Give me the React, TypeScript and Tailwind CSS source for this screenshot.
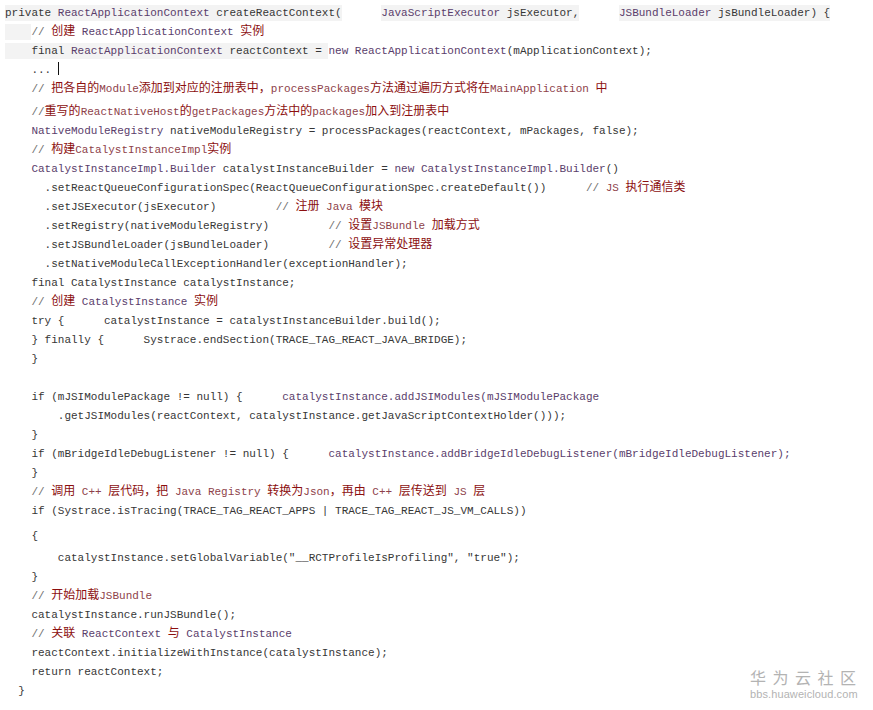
import React from "react";

type Kind = "c" | "t" | "g" | "r" | "e";
type Seg = [Kind, string, boolean?];

const colors: Record<Kind, string> = {
  c: "text-[#363636]",
  t: "text-[#5a3d6b]",
  g: "text-[#707070]",
  r: "text-[#8c0f0f]",
  e: "text-[#8e3f4a]",
};

// CJK glyphs are full width (12px), latin runs are 11px mono (6.6px each)
function splitCjk(text: string) {
  const parts = text.split(/([\u3000-\u9fff\uff00-\uffef]+)/);
  return parts.map((p, i) =>
    i % 2 === 1 ? (
      <span key={i} className="text-[12px]">
        {p}
      </span>
    ) : (
      p
    )
  );
}

type LineDef = { segs: Seg[]; extra?: string; cursor?: boolean };

const I4 = "    ";
const I6 = "      ";
const I8 = "        ";
const T6 = "      ";
const T9 = "         ";

const lines: LineDef[] = [
  {
    segs: [
      ["c", "private ", true],
      ["t", "ReactApplicationContext", true],
      ["c", " createReactContext(", true],
      ["c", T6],
      ["t", "JavaScriptExecutor", true],
      ["c", " jsExecutor,", true],
      ["c", T6],
      ["t", "JSBundleLoader", true],
      ["c", " jsBundleLoader) {", true],
    ],
  },
  {
    segs: [
      ["c", I4, true],
      ["g", "// "],
      ["r", "创建 "],
      ["t", "ReactApplicationContext"],
      ["r", " 实例"],
    ],
  },
  {
    segs: [
      ["c", I4 + "final ", true],
      ["t", "ReactApplicationContext", true],
      ["c", " reactContext = ", true],
      ["t", "new ReactApplicationContext"],
      ["c", "(mApplicationContext);"],
    ],
  },
  { segs: [["c", I4 + "... "]], cursor: true },
  {
    segs: [
      ["c", I4],
      ["g", "// "],
      ["r", "把各自的"],
      ["e", "Module"],
      ["r", "添加到对应的注册表中，"],
      ["e", "processPackages"],
      ["r", "方法通过遍历方式将在"],
      ["e", "MainApplication "],
      ["r", "中"],
    ],
  },
  {
    extra: "mt-[4px]",
    segs: [
      ["c", I4],
      ["g", "//"],
      ["r", "重写的"],
      ["e", "ReactNativeHost"],
      ["r", "的"],
      ["e", "getPackages"],
      ["r", "方法中的"],
      ["e", "packages"],
      ["r", "加入到注册表中"],
    ],
  },
  {
    segs: [
      ["c", I4],
      ["t", "NativeModuleRegistry"],
      ["c", " nativeModuleRegistry = processPackages(reactContext, mPackages, false);"],
    ],
  },
  {
    segs: [
      ["c", I4],
      ["g", "// "],
      ["r", "构建"],
      ["e", "CatalystInstanceImpl"],
      ["r", "实例"],
    ],
  },
  {
    segs: [
      ["c", I4],
      ["t", "CatalystInstanceImpl.Builder"],
      ["c", " catalystInstanceBuilder = "],
      ["t", "new CatalystInstanceImpl.Builder"],
      ["c", "()"],
    ],
  },
  {
    segs: [
      ["c", I6 + ".setReactQueueConfigurationSpec(ReactQueueConfigurationSpec.createDefault())" + T6],
      ["g", "// "],
      ["e", "JS "],
      ["r", "执行通信类"],
    ],
  },
  {
    segs: [
      ["c", I6 + ".setJSExecutor(jsExecutor)" + T9],
      ["g", "// "],
      ["r", "注册 "],
      ["e", "Java "],
      ["r", "模块"],
    ],
  },
  {
    segs: [
      ["c", I6 + ".setRegistry(nativeModuleRegistry)" + T9],
      ["g", "// "],
      ["r", "设置"],
      ["e", "JSBundle "],
      ["r", "加载方式"],
    ],
  },
  {
    segs: [
      ["c", I6 + ".setJSBundleLoader(jsBundleLoader)" + T9],
      ["g", "// "],
      ["r", "设置异常处理器"],
    ],
  },
  { segs: [["c", I6 + ".setNativeModuleCallExceptionHandler(exceptionHandler);"]] },
  { segs: [["c", I4 + "final CatalystInstance catalystInstance;"]] },
  {
    segs: [
      ["c", I4],
      ["g", "// "],
      ["r", "创建 "],
      ["t", "CatalystInstance"],
      ["r", " 实例"],
    ],
  },
  { segs: [["c", I4 + "try {" + T6 + "catalystInstance = catalystInstanceBuilder.build();"]] },
  { segs: [["c", I4 + "} finally {" + T6 + "Systrace.endSection(TRACE_TAG_REACT_JAVA_BRIDGE);"]] },
  { segs: [["c", I4 + "}"]] },
  { segs: [["c", " "]] },
  {
    segs: [
      ["c", I4 + "if (mJSIModulePackage != null) {" + T6],
      ["t", "catalystInstance.addJSIModules(mJSIModulePackage"],
    ],
  },
  { segs: [["c", I8 + ".getJSIModules(reactContext, catalystInstance.getJavaScriptContextHolder()));"]] },
  { segs: [["c", I4 + "}"]] },
  {
    segs: [
      ["c", I4 + "if (mBridgeIdleDebugListener != null) {" + T6],
      ["t", "catalystInstance.addBridgeIdleDebugListener(mBridgeIdleDebugListener);"],
    ],
  },
  { segs: [["c", I4 + "}"]] },
  {
    segs: [
      ["c", I4],
      ["g", "// "],
      ["r", "调用 "],
      ["e", "C++ "],
      ["r", "层代码，把 "],
      ["e", "Java Registry "],
      ["r", "转换为"],
      ["e", "Json"],
      ["r", "，再由 "],
      ["e", "C++ "],
      ["r", "层传送到 "],
      ["e", "JS "],
      ["r", "层"],
    ],
  },
  { segs: [["c", I4 + "if (Systrace.isTracing(TRACE_TAG_REACT_APPS | TRACE_TAG_REACT_JS_VM_CALLS))"]] },
  { extra: "mt-[6px]", segs: [["c", I4 + "{"]] },
  {
    extra: "mt-[3px]",
    segs: [["c", I8 + "catalystInstance.setGlobalVariable(\"__RCTProfileIsProfiling\", \"true\");"]],
  },
  { segs: [["c", I4 + "}"]] },
  {
    segs: [
      ["c", I4],
      ["g", "// "],
      ["r", "开始加载"],
      ["e", "JSBundle"],
    ],
  },
  { segs: [["c", I4 + "catalystInstance.runJSBundle();"]] },
  {
    segs: [
      ["c", I4],
      ["g", "// "],
      ["r", "关联 "],
      ["t", "ReactContext "],
      ["r", "与 "],
      ["t", "CatalystInstance"],
    ],
  },
  { segs: [["c", I4 + "reactContext.initializeWithInstance(catalystInstance);"]] },
  { segs: [["c", I4 + "return reactContext;"]] },
  { segs: [["c", "  }"]] },
];

function CodeLine({ line }: { line: LineDef }) {
  return (
    <div className={`h-[19px] leading-[19px] whitespace-pre pl-[5px] ${line.extra ?? ""}`}>
      {line.segs.map((s, i) => (
        <span key={i} className={`${colors[s[0]]} ${s[2] ? "bg-[#f3f3f3] py-[2px]" : ""}`}>
          {splitCjk(s[1])}
        </span>
      ))}
      {line.cursor && (
        <span className="inline-block w-px h-[13px] bg-[#111] align-[-2px]" />
      )}
    </div>
  );
}

export default function App() {
  return (
    <div
      className="relative w-[873px] h-[710px] bg-white overflow-hidden text-[11px]"
      style={{ fontFamily: '"Liberation Mono", "Noto Sans CJK SC", monospace' }}
    >
      <div className="flex flex-col pt-[4px]">
        {lines.map((l, i) => (
          <CodeLine key={i} line={l} />
        ))}
      </div>

      {/* watermark */}
      <div
        className="absolute left-[750px] top-[669px] flex flex-col text-[#b3b3b3]"
        style={{ fontFamily: '"Liberation Sans", "Noto Sans CJK SC", sans-serif' }}
      >
        <div className="text-[16px] leading-[20px] tracking-[6.5px] whitespace-nowrap">华为云社区</div>
        <div className="text-[11px] leading-[13px] -mt-[1px] tracking-[0.1px] whitespace-nowrap">bbs.huaweicloud.com</div>
      </div>
    </div>
  );
}
